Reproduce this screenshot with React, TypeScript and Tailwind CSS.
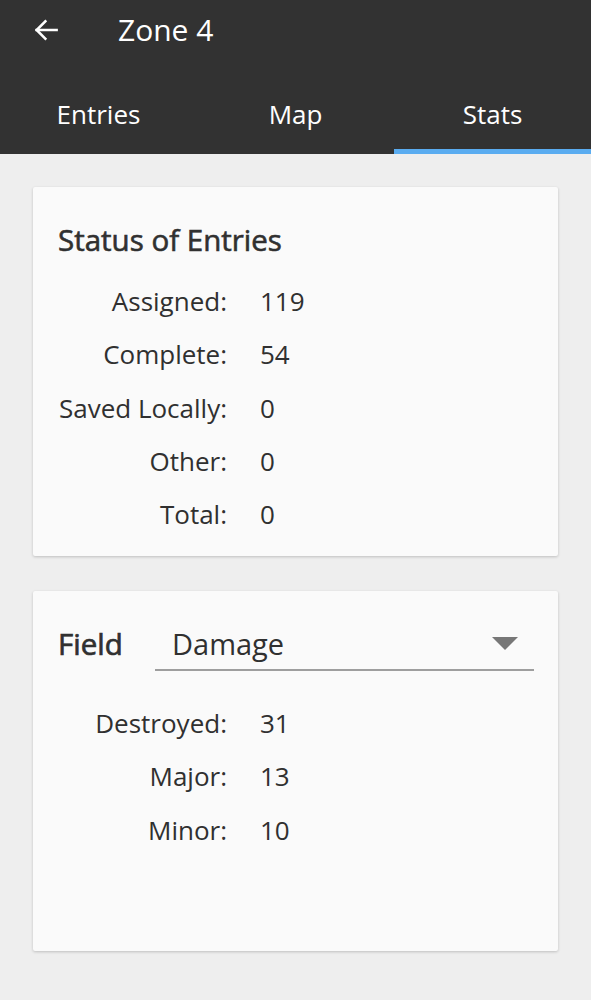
import React from "react";

const statusRows = [
  ["Assigned:", "119"],
  ["Complete:", "54"],
  ["Saved Locally:", "0"],
  ["Other:", "0"],
  ["Total:", "0"],
];

const fieldRows = [
  ["Destroyed:", "31"],
  ["Major:", "13"],
  ["Minor:", "10"],
];

function Row({ label, value }: { label: string; value: string }) {
  return (
    <div className="flex h-[53.3px] items-center">
      <div className="w-[194px] text-right">{label}</div>
      <div className="pl-[33px]">{value}</div>
    </div>
  );
}

export default function App() {
  return (
    <div
      className="min-h-[1000px] bg-[#eeeeee] text-[#303030]"
      style={{ fontFamily: '"Open Sans", "Noto Sans", sans-serif' }}
    >
      <div className="bg-[#323232] text-white">
        <div className="flex h-[60px] items-center">
          <div className="flex w-[118px] items-center pl-[31px]">
            <svg width="30" height="30" viewBox="0 0 24 24" fill="none" stroke="white" strokeWidth="2" strokeLinecap="square">
              <path d="M20.5 12H4.5" />
              <path d="M11.5 5L4.5 12l7 7" />
            </svg>
          </div>
          <div className="text-[30px] leading-none">Zone 4</div>
        </div>
        <div className="flex h-[94px]">
          {["Entries", "Map", "Stats"].map((t, i) => (
            <div key={t} className="relative flex flex-1 items-center justify-center pt-[14px] text-[26px]">
              {t}
              {i === 2 && <div className="absolute bottom-0 left-0 right-0 h-[5px] bg-[#5aacf0]" />}
            </div>
          ))}
        </div>
      </div>

      <div className="px-[33px] pt-[33px]">
        <div className="h-[369px] rounded-[2px] bg-[#fafafa] pl-[25px] pt-[33px] text-[26px] shadow-[0_1px_3px_rgba(0,0,0,0.2)]">
          <div className="mb-[15px] text-[29.5px] leading-[40px] [-webkit-text-stroke:0.6px_#303030]">Status of Entries</div>
          <div className="-ml-[25px]">
            {statusRows.map(([l, v]) => (
              <Row key={l} label={l} value={v} />
            ))}
          </div>
        </div>

        <div className="mt-[35px] h-[360px] rounded-[2px] bg-[#fafafa] pt-[27px] text-[26px] shadow-[0_1px_3px_rgba(0,0,0,0.2)]">
          <div className="flex items-start">
            <div className="w-[122px] pl-[25px] pt-[6px] text-[29.5px] leading-[40px] [-webkit-text-stroke:0.7px_#303030]">Field</div>
            <div className="mr-[24px] flex h-[53px] flex-1 items-center justify-between border-b-2 border-[#9e9e9e] pl-[17px] pr-[16px]">
              <span className="text-[29px]">Damage</span>
              <svg width="26" height="14" viewBox="0 0 26 14">
                <path d="M0 0H26L13 13Z" fill="#777777" />
              </svg>
            </div>
          </div>
          <div className="mt-[26px]">
            {fieldRows.map(([l, v]) => (
              <Row key={l} label={l} value={v} />
            ))}
          </div>
        </div>
      </div>
    </div>
  );
}
